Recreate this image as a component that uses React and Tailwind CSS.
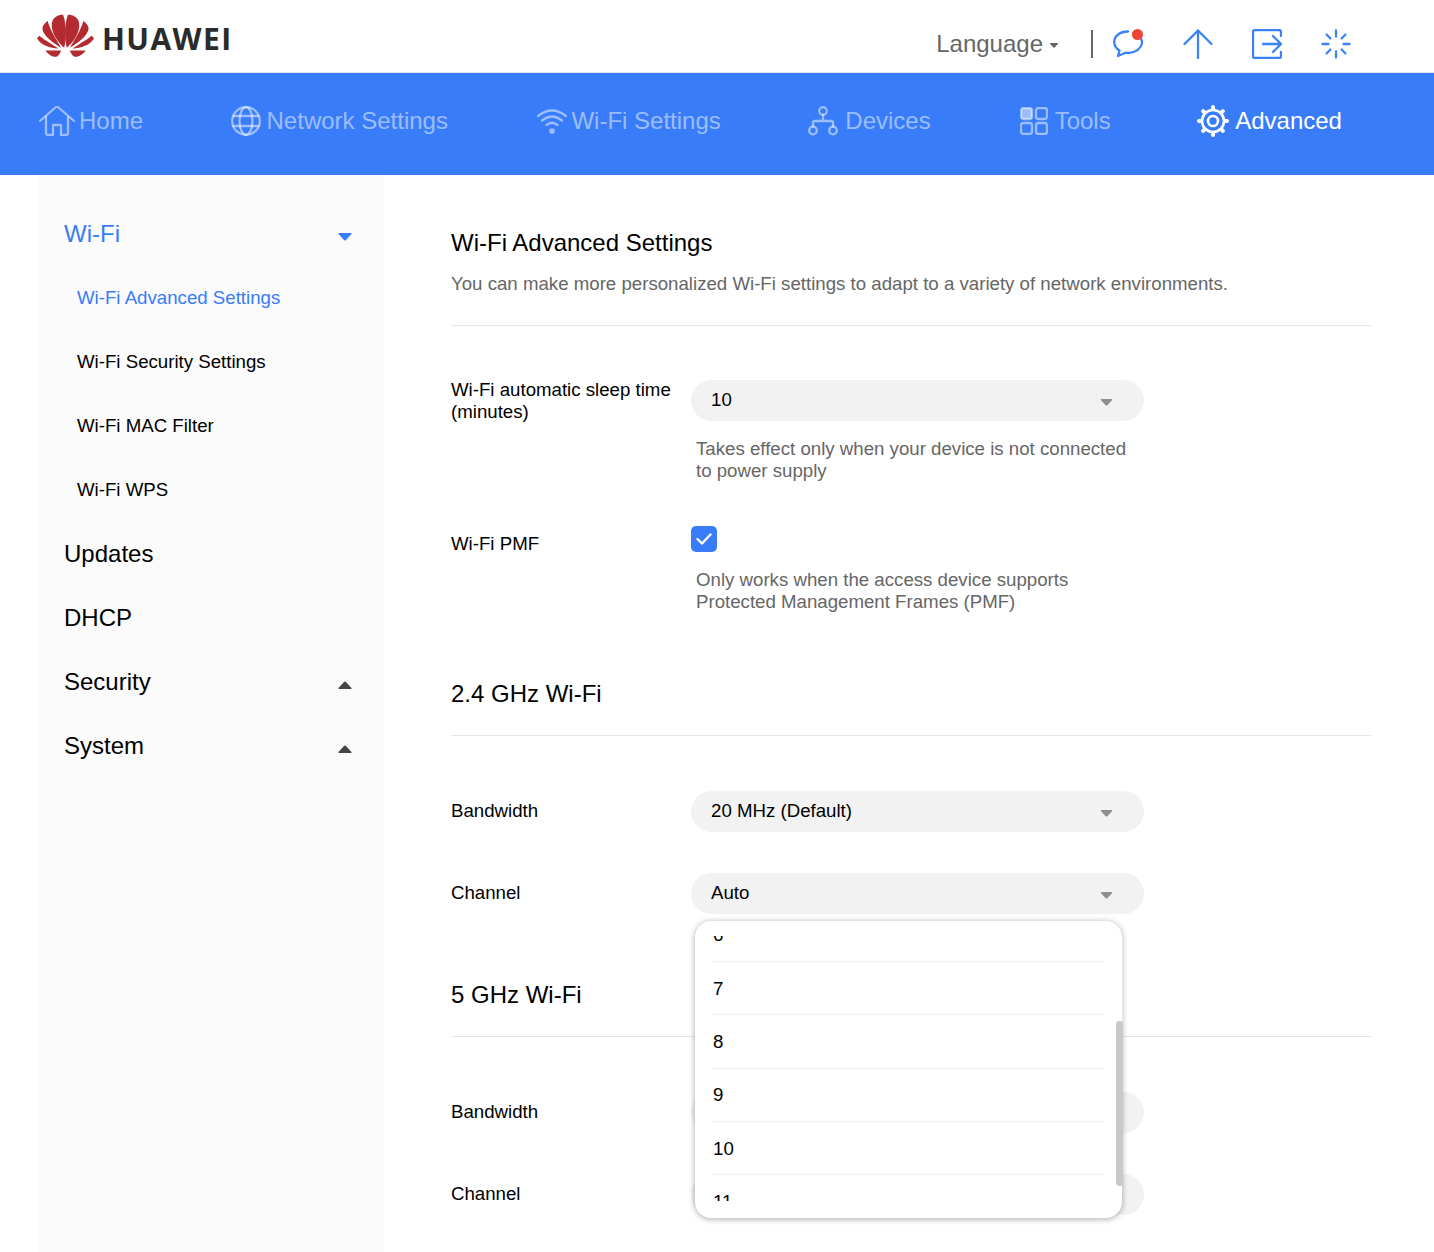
import { useState } from "react";

function Caret({ className }) {
  return (
    <svg viewBox="0 0 14 8" className={className}>
      <path d="M0.5 1 Q0 0 1.2 0 H12.8 Q14 0 13.5 1 L8 7 Q7 8 6 7 Z" fill="currentColor" />
    </svg>
  );
}

function CaretUp({ className }) {
  return (
    <svg viewBox="0 0 14 8" className={className}>
      <path d="M0.5 7 Q0 8 1.2 8 H12.8 Q14 8 13.5 7 L8 1 Q7 0 6 1 Z" fill="currentColor" />
    </svg>
  );
}

function Petals() {
  return (
    <>
      <path d="M101 120 C78 100 56 65 67 38 C73 27 88 20 98 22 C107 45 109 90 101 120 Z" />
      <path d="M92 120 C70 108 38 85 36 62 C37 52 46 44 52 40 C60 70 78 95 92 120 Z" />
      <path d="M84 122 C60 122 30 112 20 92 L27 84 C44 98 66 110 84 122 Z" />
      <path d="M92 128 H45 C55 142 72 150 80 146 C86 142 90 134 92 128 Z" />
    </>
  );
}

function HuaweiLogo() {
  return (
    <svg viewBox="20 20 170 130" className="w-[57px] h-[44px]">
      <g fill="#b32a30">
        <Petals />
        <g transform="translate(210 0) scale(-1 1)">
          <Petals />
        </g>
      </g>
    </svg>
  );
}

const stroke = {
  fill: "none",
  stroke: "currentColor",
  strokeWidth: 2.3,
  strokeLinecap: "round",
  strokeLinejoin: "round",
};

const gearTeeth = [0, 45, 90, 135, 180, 225, 270, 315];

const navIcons = {
  home: (
    <svg viewBox="0 0 36 30" className="w-[36px] h-[30px]" {...stroke}>
      <path d="M1 15 L17 1 Q18 0 19 1 L35 15" />
      <path d="M7 11 V27 Q7 29 9 29 H14 V19 H22 V29 H27 Q29 29 29 27 V11" />
    </svg>
  ),
  globe: (
    <svg viewBox="0 0 30 30" className="w-[30px] h-[30px]" {...stroke}>
      <circle cx="15" cy="15" r="13.8" />
      <ellipse cx="15" cy="15" rx="6.5" ry="13.8" />
      <path d="M2.5 10 H27.5 M2.5 20 H27.5" />
    </svg>
  ),
  wifi: (
    <svg viewBox="0 0 30 26" className="w-[30px] h-[26px]" {...stroke}>
      <path d="M1 8 Q15 -3 29 8" />
      <path d="M5 12.5 Q15 4.5 25 12.5" />
      <path d="M9.5 17 Q15 12.5 20.5 17" />
      <circle cx="15" cy="23" r="2.8" fill="currentColor" stroke="none" />
    </svg>
  ),
  devices: (
    <svg viewBox="0 0 30 30" className="w-[30px] h-[30px]" {...stroke}>
      <circle cx="15" cy="5" r="3.8" />
      <circle cx="5" cy="24.5" r="3.8" />
      <circle cx="25" cy="24.5" r="3.8" />
      <path d="M15 9 V15 M5 20.5 V17 Q5 15 7 15 H23 Q25 15 25 17 V20.5" />
    </svg>
  ),
  tools: (
    <svg viewBox="0 0 28 28" className="w-[28px] h-[28px]" {...stroke}>
      <rect x="1" y="1" width="11" height="11" rx="2.5" fill="currentColor" />
      <rect x="16" y="1" width="11" height="11" rx="2.5" />
      <rect x="1" y="16" width="11" height="11" rx="2.5" />
      <rect x="16" y="16" width="11" height="11" rx="2.5" />
    </svg>
  ),
  gear: (
    <svg viewBox="0 0 32 32" className="w-[32px] h-[32px]" {...stroke}>
      <circle cx="16" cy="16" r="11" strokeWidth="2.6" />
      <circle cx="16" cy="16" r="5" strokeWidth="2.6" />
      {gearTeeth.map((a) => (
        <path key={a} d="M16 3.5 V2" strokeWidth="4" transform={`rotate(${a} 16 16)`} />
      ))}
    </svg>
  ),
};

const navItems = [
  { icon: "home", label: "Home", spacing: "gap-[4px]" },
  { icon: "globe", label: "Network Settings", spacing: "gap-[6px]" },
  { icon: "wifi", label: "Wi-Fi Settings", spacing: "gap-[4.5px] pl-[1.5px]" },
  { icon: "devices", label: "Devices", spacing: "gap-[7px]" },
  { icon: "tools", label: "Tools", spacing: "gap-[7px] ml-[1.5px]" },
  { icon: "gear", label: "Advanced", spacing: "gap-[6.5px] -ml-[1.5px]", active: true },
];

function Select({ value, children }) {
  return (
    <div className="relative w-[453px]">
      <div className="h-[41px] rounded-full bg-[#f2f2f2] pl-[20px] pr-[31px] flex items-center justify-between text-[18.67px] text-black">
        <span className="-mt-[2px]">{value}</span>
        <Caret className="w-[13px] h-[7px] mt-[3px] text-[#8f8f8f]" />
      </div>
      {children}
    </div>
  );
}

function SectionTitle({ children, className }) {
  return (
    <div className={className}>
      <h2 className="text-[24px] leading-[28px] font-normal text-black">{children}</h2>
    </div>
  );
}

function ChannelMenu() {
  const channels = ["6", "7", "8", "9", "10", "11"];
  return (
    <div className="absolute z-10 left-[4px] top-[48px] w-[427px] h-[297px] rounded-[16px] bg-white shadow-[0_1px_6px_rgba(0,0,0,0.35)] py-[15px]">
      <div className="h-[265px] overflow-hidden pl-[16px] pr-[17px]">
        <div className="-mt-[27.2px]">
          {channels.map((c) => (
            <div
              key={c}
              className="h-[53.3px] flex items-center pl-[2px] pt-[1px] border-b border-[#efefef] text-[18.67px] text-black last:border-b-0"
            >
              {c}
            </div>
          ))}
        </div>
      </div>
      <div className="absolute -right-px top-[16px] w-px h-[84px] bg-[#e8e8e8]" />
      <div className="absolute -right-px top-[100px] w-[7px] h-[165px] rounded-full bg-[#c9c9c9]" />
    </div>
  );
}

export default function App() {
  const [sleepTime] = useState("10");

  return (
    <div className="w-[1434px] h-[1252px] overflow-hidden bg-white font-['Liberation_Sans',Arial,sans-serif]">
      {/* Top bar */}
      <header className="h-[73px] flex items-center justify-between pl-[37px] pr-[83px] border-b border-[#e2e2e2]">
        <div className="flex items-center gap-[8px]">
          <HuaweiLogo />
          <span className="font-['Open_Sans',sans-serif] font-bold text-[30px] leading-none tracking-[1.4px] text-[#2b2b2b] mt-[6px]">
            HUAWEI
          </span>
        </div>
        <div className="flex items-center mt-[15px] text-[#3a82f6]">
          <div className="flex items-center text-[24px] text-[#666666]">
            Language
            <Caret className="w-[10px] h-[5px] ml-[6px] mt-[3px]" />
          </div>
          <div className="w-[2px] h-[28px] bg-[#666666] ml-[32px] mr-[20px]" />
          <div className="relative w-[30px] h-[30px]">
            <svg viewBox="0 0 30 30" className="w-[30px] h-[30px]" {...stroke}>
              <path d="M15 2.5 C7 2.5 1.2 7 1.2 13 C1.2 17 3 19.5 6.5 21.5 L5 27 L12.5 23.7 Q13.7 23.8 15 23.8 C23 23.8 29 19 29 13 C29 10.5 28 8.5 26 6.5" />
            </svg>
            <div className="absolute right-0 top-0 w-[11px] h-[11px] rounded-full bg-[#ee4433]" />
          </div>
          <svg viewBox="0 0 30 30" className="w-[30px] h-[30px] ml-[40px]" {...stroke}>
            <path d="M15 1.5 V29 M1.5 15 L15 1.5 L28.5 15" />
          </svg>
          <svg viewBox="0 0 30 30" className="w-[30px] h-[30px] ml-[39px]" {...stroke}>
            <path d="M29 7 V3 Q29 1 27 1 H3 Q1 1 1 3 V27 Q1 29 3 29 H27 Q29 29 29 27 V23" />
            <path d="M11 15 H28 M21 7 L29 15 L21 23" />
          </svg>
          <svg viewBox="0 0 30 30" className="w-[30px] h-[30px] ml-[39px]" {...stroke}>
            <path d="M15 1.5 V7.5 M15 22.5 V28.5 M1.5 15 H7.5 M22.5 15 H28.5 M5.5 5.5 L9.5 9.5 M20.5 20.5 L24.5 24.5 M24.5 5.5 L20.5 9.5 M9.5 20.5 L5.5 24.5" />
          </svg>
        </div>
      </header>

      {/* Main navigation */}
      <nav className="h-[102px] bg-[#387cfa] flex items-center gap-[87.5px] pl-[39px] pb-[6px] text-[24px]">
        {navItems.map((item) => (
          <div
            key={item.label}
            className={`flex items-center ${item.spacing} ${item.active ? "text-white" : "text-white/50"}`}
          >
            {navIcons[item.icon]}
            <span>{item.label}</span>
          </div>
        ))}
      </nav>

      <div className="flex items-start pl-[37px]">
        {/* Sidebar */}
        <aside className="w-[347px] h-[1077px] bg-[#fbfbfb] pt-[27px] pl-[27px] pr-[31px]">
          <div className="h-[64px] flex items-center justify-between text-[24px] text-[#387cfa]">
            Wi-Fi
            <Caret className="w-[16px] h-[8px] mt-[6px]" />
          </div>
          <div className="pl-[13px] text-[18.67px] text-black">
            <div className="h-[64px] flex items-center text-[#387cfa]">Wi-Fi Advanced Settings</div>
            <div className="h-[64px] flex items-center">Wi-Fi Security Settings</div>
            <div className="h-[64px] flex items-center">Wi-Fi MAC Filter</div>
            <div className="h-[64px] flex items-center">Wi-Fi WPS</div>
          </div>
          <div className="h-[64px] flex items-center text-[24px] text-black">Updates</div>
          <div className="h-[64px] flex items-center text-[24px] text-black">DHCP</div>
          <div className="h-[64px] flex items-center justify-between text-[24px] text-black">
            Security
            <CaretUp className="w-[16px] h-[8px] text-[#444444] mt-[6px]" />
          </div>
          <div className="h-[64px] flex items-center justify-between text-[24px] text-black">
            System
            <CaretUp className="w-[16px] h-[8px] text-[#444444] mt-[6px]" />
          </div>
        </aside>

        {/* Content */}
        <main className="w-[920px] ml-[67px] pt-[54px] text-[18.67px] text-black">
          <h1 className="text-[24px] leading-[28px] font-normal">Wi-Fi Advanced Settings</h1>
          <p className="mt-[16px] leading-[22px] text-[#666666]">
            You can make more personalized Wi-Fi settings to adapt to a variety of network environments.
          </p>
          <div className="mt-[30px] border-t border-[#e5e5e5]" />

          <div className="mt-[54px] flex">
            <div className="w-[240px] leading-[22px] -mt-[1px]">
              Wi-Fi automatic sleep time
              <br />
              (minutes)
            </div>
            <div>
              <Select value={sleepTime} />
              <p className="mt-[17px] ml-[5px] w-[440px] leading-[22px] text-[#666666]">
                Takes effect only when your device is not connected to power supply
              </p>
            </div>
          </div>

          <div className="mt-[44px] flex">
            <div className="w-[240px] leading-[22px] pt-[7px]">Wi-Fi PMF</div>
            <div>
              <div className="w-[26px] h-[26px] rounded-[5px] bg-[#387cfa] flex items-center justify-center">
                <svg viewBox="0 0 16 12" className="w-[16px] h-[12px]" fill="none" stroke="white" strokeWidth="2.4" strokeLinecap="round" strokeLinejoin="round">
                  <path d="M1.5 6 L6 10.5 L14.5 1.5" />
                </svg>
              </div>
              <p className="mt-[17px] ml-[5px] w-[440px] leading-[22px] text-[#666666]">
                Only works when the access device supports Protected Management Frames (PMF)
              </p>
            </div>
          </div>

          <SectionTitle className="mt-[67px]">2.4 GHz Wi-Fi</SectionTitle>
          <div className="mt-[27px] border-t border-[#e5e5e5]" />

          <div className="mt-[55px] flex items-center">
            <div className="w-[240px] -mt-[2px]">Bandwidth</div>
            <Select value="20 MHz (Default)" />
          </div>
          <div className="mt-[41px] flex items-center">
            <div className="w-[240px] -mt-[2px]">Channel</div>
            <Select value="Auto">
              <ChannelMenu />
            </Select>
          </div>

          <SectionTitle className="mt-[67px]">5 GHz Wi-Fi</SectionTitle>
          <div className="mt-[27px] border-t border-[#e5e5e5]" />

          <div className="mt-[55px] flex items-center">
            <div className="w-[240px] -mt-[2px]">Bandwidth</div>
            <Select value="" />
          </div>
          <div className="mt-[41px] flex items-center">
            <div className="w-[240px] -mt-[2px]">Channel</div>
            <Select value="" />
          </div>
        </main>
      </div>
    </div>
  );
}
